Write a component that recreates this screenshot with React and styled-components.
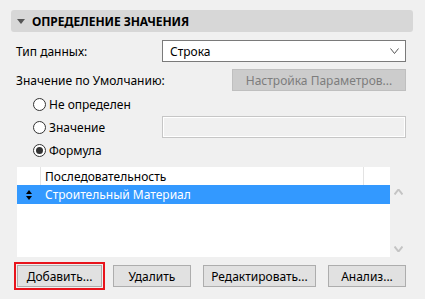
import React from "react";
import styled, { createGlobalStyle } from "styled-components";

const Global = createGlobalStyle`
  html, body { margin: 0; padding: 0; background: #f0f0f0; }
  body { font-family: "Noto Sans", "Open Sans", sans-serif; font-size: 12px; color: #000; }
  * { box-sizing: border-box; }
`;

const Page = styled.div`
  width: 425px;
  height: 299px;
  padding: 10px 12px 0 11px;
  background: #f0f0f0;
`;

const Header = styled.div`
  height: 22px;
  background: #d7d7d7;
  border-radius: 3px;
  display: flex;
  align-items: center;
  padding-left: 6px;
  gap: 7px;
  font-weight: 700;
  font-size: 12px;
  letter-spacing: -0.1px;
`;

const Body = styled.div`
  padding: 0 7px 0 5px;
  display: flex;
  flex-direction: column;
`;

const Row = styled.div`
  display: flex;
  align-items: center;
  height: 22px;
  margin-top: ${(p) => p.$mt || 0}px;
`;

const Label = styled.span`
  flex: 1;
  white-space: nowrap;
`;

const Select = styled.div`
  width: 244px;
  height: 22px;
  background: #fff;
  border: 1px solid #7a7a7a;
  display: flex;
  align-items: center;
  justify-content: space-between;
  padding: 0 6px 0 7px;
`;

const PlainButton = styled.button`
  font-family: inherit;
  font-size: 12px;
  height: 22px;
  width: ${(p) => p.$w}px;
  padding: 0;
  background: ${(p) => (p.disabled ? "#cccccc" : "#e1e1e1")};
  color: ${(p) => (p.disabled ? "#7d7d7d" : "#000")};
  border: 1px solid ${(p) => (p.disabled ? "#bfbfbf" : "#adadad")};
  outline: ${(p) => (p.$focus ? "2px solid #e8141c" : "none")};
  outline-offset: 1px;
  cursor: default;
`;

const RadioRow = styled.div`
  display: flex;
  align-items: center;
  height: 22px;
  padding-left: 17px;
  margin-top: ${(p) => p.$mt || 0}px;
`;

const RadioCircle = styled.span`
  width: 13px;
  height: 13px;
  border-radius: 50%;
  border: 1px solid #333;
  background: #fff;
  display: flex;
  align-items: center;
  justify-content: center;
  margin-right: 3px;
  flex: none;
  &::after {
    content: "";
    width: 7px;
    height: 7px;
    border-radius: 50%;
    background: ${(p) => (p.$on ? "#333" : "transparent")};
  }
`;

const RadioLabel = styled.span`
  flex: 1;
`;

const TextInput = styled.div`
  width: 244px;
  height: 22px;
  background: #f0f0f0;
  border: 1px solid #c6c6c6;
  box-shadow: inset -1px -1px 0 #fff, inset 1px 1px 0 #fff;
`;

const ListWrap = styled.div`
  display: flex;
  margin-top: 6px;
  margin-left: 1px;
  height: 90px;
`;

const List = styled.div`
  flex: 1;
  background: #fff;
  display: flex;
  flex-direction: column;
`;

const ListRow = styled.div`
  display: grid;
  grid-template-columns: 24px 323px 1fr;
  height: ${(p) => p.$h}px;
  background: ${(p) => (p.$sel ? "#3399ff" : "#fff")};
  color: ${(p) => (p.$sel ? "#fff" : "#000")};
`;

const Cell = styled.div`
  display: flex;
  align-items: center;
  justify-content: ${(p) => (p.$center ? "center" : "flex-start")};
  padding-left: ${(p) => (p.$center ? 0 : 4)}px;
  border-right: ${(p) => (p.$div ? "1px solid #e3e3e3" : "none")};
  white-space: nowrap;
`;

const Scroll = styled.div`
  width: 16px;
  display: flex;
  flex-direction: column;
  align-items: center;
  justify-content: space-between;
  padding: 22px 0 5px;
`;

const Buttons = styled.div`
  display: flex;
  gap: 11px;
  margin-top: 8px;
  margin-left: 1px;
  & > button:nth-child(n + 3) {
    margin-left: 1px;
  }
`;

const Chevron = ({ up, color = "#555", w = 9, h = 5, sw = 1 }) => (
  <svg width={w} height={h + 1} viewBox={`0 0 ${w} ${h + 1}`}>
    <polyline
      points={
        up
          ? `0.5,${h + 0.5} ${w / 2},0.5 ${w - 0.5},${h + 0.5}`
          : `0.5,0.5 ${w / 2},${h + 0.5} ${w - 0.5},0.5`
      }
      fill="none"
      stroke={color}
      strokeWidth={sw}
    />
  </svg>
);

const Triangle = () => (
  <svg width="8" height="5" viewBox="0 0 8 5">
    <polygon points="0,0 8,0 4,5" fill="#555" />
  </svg>
);

const UpDown = () => (
  <svg width="6" height="10" viewBox="0 0 6 10">
    <polygon points="3,0 6,4 0,4" fill="#000" />
    <polygon points="0,6 6,6 3,10" fill="#000" />
  </svg>
);

export default function App() {
  return (
    <>
      <Global />
      <Page>
        <Header>
          <Triangle />
          <span>ОПРЕДЕЛЕНИЕ ЗНАЧЕНИЯ</span>
        </Header>
        <Body>
          <Row $mt={8}>
            <Label>Тип данных:</Label>
            <Select>
              <span>Строка</span>
              <Chevron />
            </Select>
          </Row>
          <Row $mt={7}>
            <Label>Значение по Умолчанию:</Label>
            <PlainButton $w={174} disabled>
              Настройка Параметров...
            </PlainButton>
          </Row>
          <RadioRow $mt={2}>
            <RadioCircle />
            <RadioLabel>Не определен</RadioLabel>
          </RadioRow>
          <RadioRow $mt={1}>
            <RadioCircle />
            <RadioLabel>Значение</RadioLabel>
            <TextInput />
          </RadioRow>
          <RadioRow $mt={1}>
            <RadioCircle $on />
            <RadioLabel>Формула</RadioLabel>
          </RadioRow>
          <ListWrap>
            <List>
              <ListRow $h={18}>
                <Cell $div />
                <Cell $div>Последовательность</Cell>
                <Cell />
              </ListRow>
              <ListRow $h={19} $sel>
                <Cell $center>
                  <UpDown />
                </Cell>
                <Cell>Строительный Материал</Cell>
                <Cell />
              </ListRow>
            </List>
            <Scroll>
              <Chevron up color="#c4c4c4" w={9} h={5} sw={2} />
              <Chevron color="#c4c4c4" w={9} h={5} sw={2} />
            </Scroll>
          </ListWrap>
          <Buttons>
            <PlainButton $w={85} $focus>
              Добавить...
            </PlainButton>
            <PlainButton $w={78}>Удалить</PlainButton>
            <PlainButton $w={113}>Редактировать...</PlainButton>
            <PlainButton $w={78}>Анализ...</PlainButton>
          </Buttons>
        </Body>
      </Page>
    </>
  );
}
